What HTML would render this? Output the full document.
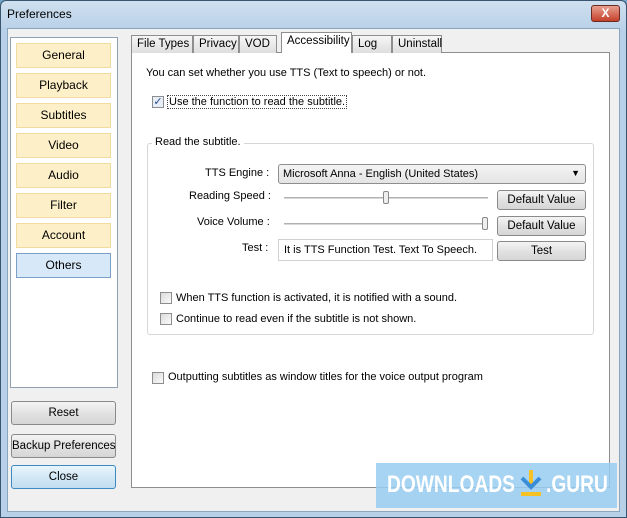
<!DOCTYPE html><html><head><style>
*{box-sizing:border-box;margin:0;padding:0}
body{width:627px;height:518px;background:#6fa3c8;font-family:"Liberation Sans",sans-serif;font-size:11px;color:#000;position:relative;overflow:hidden;white-space:nowrap}
.a{position:absolute}
.win{left:0;top:0;width:627px;height:518px;background:linear-gradient(#cfe0ef,#b9d1e8 28px);border:1px solid #39556f;border-radius:6px 6px 0 0}
.body{left:7px;top:28px;width:613px;height:484px;background:#f0f0f0;border:1px solid #8aa6bf}
.nav{left:10px;top:37px;width:108px;height:351px;background:#fff;border:1px solid #8fa0b3}
.nb{left:16px;width:95px;height:25px;background:#fdf0c8;border:1px solid #f1dca0;text-align:center;line-height:23px;font-size:12px}
.btn{background:linear-gradient(#f4f4f4,#e2e2e2 50%,#d6d6d6);border:1px solid #8a8a8a;border-radius:3px;text-align:center;font-size:11.5px}
.tab{top:35px;height:18px;background:linear-gradient(#f6f6f6,#dedede);border:1px solid #8e8e8e;border-bottom:none;padding:0 5px;line-height:16px;font-size:11.5px}
.cb{width:12px;height:12px;border:1px solid #8d8d8d;background:linear-gradient(135deg,#dcdcdc,#fafafa)}
</style></head><body>
<div class="a win"></div>
<div class="a" style="left:7px;top:7px;font-size:12px">Preferences</div>
<div class="a" style="left:591px;top:5px;width:29px;height:17px;background:linear-gradient(#e8a090,#c4402a);border:1px solid #6b2a22;border-radius:3px;color:#fff;font-weight:bold;text-align:center;line-height:15px;font-size:12px">X</div>
<div class="a body"></div>
<div class="a nav"></div>
<div class="a nb" style="top:43px">General</div>
<div class="a nb" style="top:73px">Playback</div>
<div class="a nb" style="top:103px">Subtitles</div>
<div class="a nb" style="top:133px">Video</div>
<div class="a nb" style="top:163px">Audio</div>
<div class="a nb" style="top:193px">Filter</div>
<div class="a nb" style="top:223px">Account</div>
<div class="a nb" style="top:253px;background:#d7e8f8;border-color:#7c9fc7">Others</div>
<div class="a btn" style="left:11px;top:401px;width:105px;height:24px;line-height:22px">Reset</div>
<div class="a btn" style="left:11px;top:434px;width:105px;height:24px;line-height:22px">Backup Preferences</div>
<div class="a btn" style="left:11px;top:465px;width:105px;height:24px;line-height:22px;border-color:#3c8ac0;background:linear-gradient(#eaf5fc,#d2e8f6 50%,#c2ddf0)">Close</div>
<div class="a" style="left:131px;top:52px;width:479px;height:436px;background:#fff;border:1px solid #8e8e8e"></div>
<div class="a tab" style="left:131px;width:62px">File Types</div>
<div class="a tab" style="left:193px;width:46px">Privacy</div>
<div class="a tab" style="left:239px;width:38px">VOD</div>
<div class="a tab" style="left:281px;top:32px;height:21px;background:#fff;width:71px;border-color:#8e8e8e">Accessibility</div>
<div class="a tab" style="left:352px;width:40px">Log</div>
<div class="a tab" style="left:392px;width:50px">Uninstall</div>
<div class="a" style="left:146px;top:67px">You can set whether you use TTS (Text to speech) or not.</div>
<div class="a cb" style="left:152px;top:96px;background:#e8eef8;color:#2a4a8a;font-size:11px;line-height:10px;text-align:center">✓</div>
<div class="a" style="left:167px;top:95px;border:1px dotted #444;padding:0 1px">Use the function to read the subtitle.</div>
<div class="a" style="left:147px;top:143px;width:447px;height:192px;border:1px solid #d6d6d6;border-radius:3px"></div>
<div class="a" style="left:152px;top:136px;background:#fff;padding:0 3px">Read the subtitle.</div>
<div class="a" style="left:205px;top:167px">TTS Engine :</div>
<div class="a" style="left:278px;top:164px;width:308px;height:20px;border:1px solid #8e8e8e;border-radius:3px;background:linear-gradient(#f4f4f4,#e4e4e4);padding:3px 4px">Microsoft Anna - English (United States)<span style="position:absolute;right:5px;top:3px;font-size:9px">▼</span></div>
<div class="a" style="left:189px;top:190px">Reading Speed :</div>
<div class="a" style="left:284px;top:197px;width:204px;height:2px;background:#d8d8d8;border-top:1px solid #b0b0b0"></div>
<div class="a" style="left:383px;top:191px;width:6px;height:13px;border:1px solid #888;border-radius:2px;background:#eee"></div>
<div class="a btn" style="left:497px;top:190px;width:89px;height:20px;line-height:18px">Default Value</div>
<div class="a" style="left:197px;top:216px">Voice Volume :</div>
<div class="a" style="left:284px;top:223px;width:204px;height:2px;background:#d8d8d8;border-top:1px solid #b0b0b0"></div>
<div class="a" style="left:482px;top:217px;width:6px;height:13px;border:1px solid #888;border-radius:2px;background:#eee"></div>
<div class="a btn" style="left:497px;top:216px;width:89px;height:20px;line-height:18px">Default Value</div>
<div class="a" style="left:242px;top:242px">Test :</div>
<div class="a" style="left:278px;top:239px;width:215px;height:22px;border:1px solid #d0d0d0;padding:4px 5px">It is TTS Function Test. Text To Speech.</div>
<div class="a btn" style="left:497px;top:241px;width:89px;height:20px;line-height:18px">Test</div>
<div class="a cb" style="left:160px;top:292px"></div>
<div class="a" style="left:176px;top:292px">When TTS function is activated, it is notified with a sound.</div>
<div class="a cb" style="left:160px;top:313px"></div>
<div class="a" style="left:176px;top:313px">Continue to read even if the subtitle is not shown.</div>
<div class="a cb" style="left:152px;top:372px"></div>
<div class="a" style="left:168px;top:371px">Outputting subtitles as window titles for the voice output program</div>
<div class="a" style="left:376px;top:463px;width:241px;height:45px;background:rgba(150,205,240,.85)"></div>
<div class="a" style="left:387px;top:471px;color:#fff;font-size:24px;font-weight:bold;transform:scaleX(.8);transform-origin:left">DOWNLOADS</div>
<div class="a" style="left:546px;top:471px;color:#fff;font-size:24px;font-weight:bold;transform:scaleX(.8);transform-origin:left">.GURU</div>
<svg class="a" style="left:519px;top:468px" width="24" height="30"><path d="M12 2v14" stroke="#f6c223" stroke-width="4"/><path d="M3 10l9 9 9-9" stroke="#3a8ed8" stroke-width="4" fill="none"/><rect x="2" y="24" width="20" height="4" fill="#f6c223"/></svg>
</body></html>
